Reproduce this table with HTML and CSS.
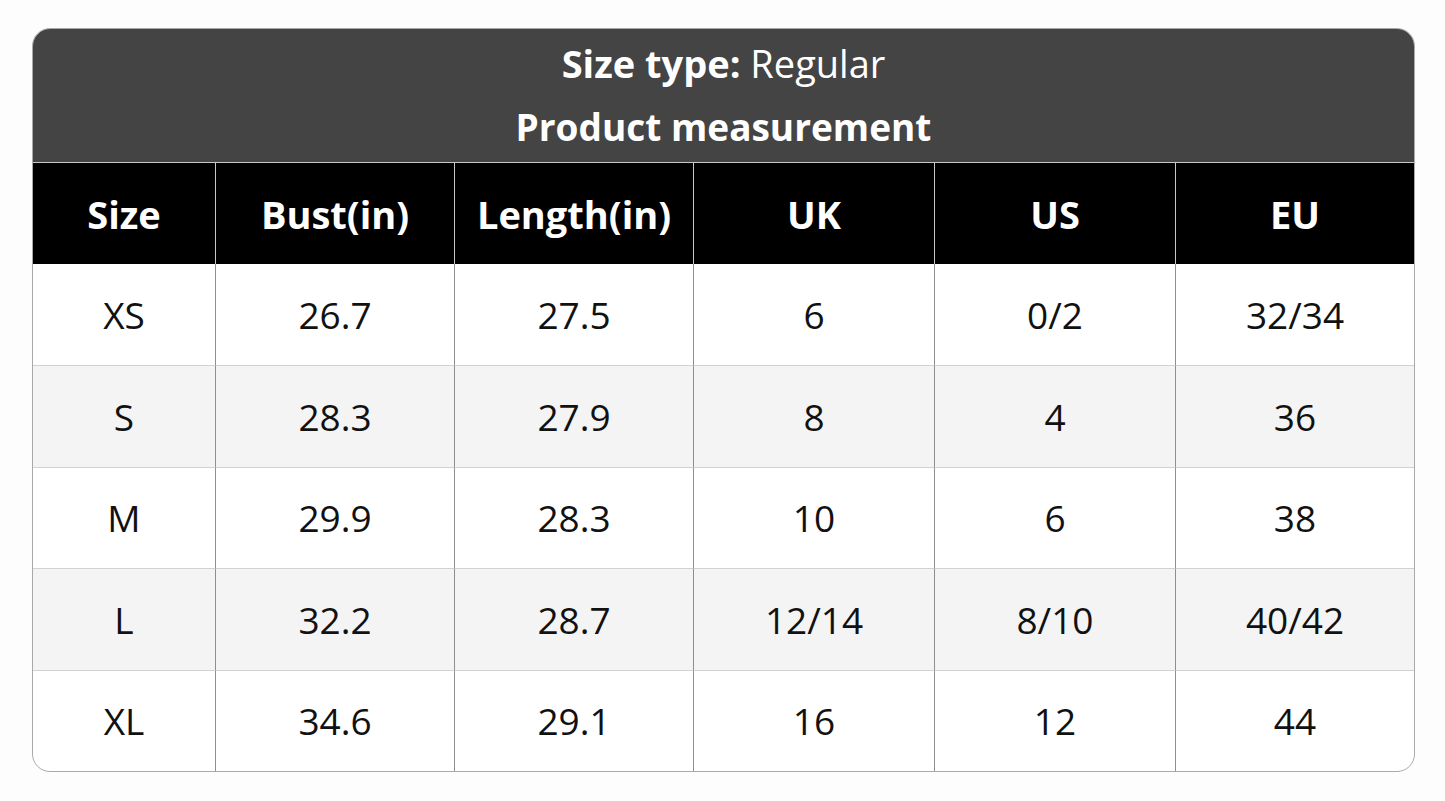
FILE: index.html
```html
<!DOCTYPE html>
<html lang="en">
<head>
<meta charset="utf-8">
<title>Size chart</title>
<link rel="stylesheet" href="styles.css">
</head>
<body>
<div class="card">
  <div class="banner">
    <div class="line1"><b>Size type:</b> Regular</div>
    <div class="line2">Product measurement</div>
  </div>
  <table class="chart">
    <colgroup>
      <col class="c1"><col class="c2"><col class="c3"><col class="c4"><col class="c5"><col class="c6">
    </colgroup>
    <thead>
      <tr><th>Size</th><th>Bust(in)</th><th>Length(in)</th><th>UK</th><th>US</th><th>EU</th></tr>
    </thead>
    <tbody>
      <tr><td>XS</td><td>26.7</td><td>27.5</td><td>6</td><td>0/2</td><td>32/34</td></tr>
      <tr class="alt"><td>S</td><td>28.3</td><td>27.9</td><td>8</td><td>4</td><td>36</td></tr>
      <tr><td>M</td><td>29.9</td><td>28.3</td><td>10</td><td>6</td><td>38</td></tr>
      <tr class="alt"><td>L</td><td>32.2</td><td>28.7</td><td>12/14</td><td>8/10</td><td>40/42</td></tr>
      <tr><td>XL</td><td>34.6</td><td>29.1</td><td>16</td><td>12</td><td>44</td></tr>
    </tbody>
  </table>
</div>
</body>
</html>
```
FILE: styles.css
```css
html, body {
  margin: 0;
  padding: 0;
  background: #fdfdfd;
}
body {
  padding: 28px 0 0 32px;
  font-family: "Open Sans", "Noto Sans", sans-serif;
}
.card {
  width: 1381px;
  border: 1px solid #a9a9a9;
  border-radius: 18px;
  overflow: hidden;
  background: #fff;
}
.banner {
  height: 133px;
  background: #444444;
  color: #fff;
  text-align: center;
  display: flex;
  flex-direction: column;
  align-items: center;
}
.line1 {
  margin-top: 12px;
  height: 44px;
  line-height: 44px;
  font-size: 38px;
  font-weight: 400;
}
.line1 b { font-weight: 700; }
.line2 {
  margin-top: 20px;
  line-height: 44px;
  font-size: 37px;
  font-weight: 700;
}
.chart {
  width: 1381px;
  table-layout: fixed;
  border-collapse: separate;
  border-spacing: 0;
}
.c1 { width: 182px; }
.c2 { width: 239px; }
.c3 { width: 239px; }
.c4 { width: 241px; }
.c5 { width: 241px; }
.c6 { width: 239px; }
.chart th, .chart td {
  padding: 0;
  text-align: center;
  border-left: 1px solid #8e8e8e;
}
.chart th:first-child, .chart td:first-child { border-left: none; }
.chart th {
  height: 101px;
  background: #000;
  color: #fff;
  font-size: 38px;
  font-weight: 700;
  border-top: 1px solid #c8c8c8;
  border-left-color: #c8c8c8;
}
.chart td {
  height: 100.5px;
  font-size: 37px;
  font-weight: 400;
  color: #111;
  border-top: 1px solid #d2d2d2;
}
.chart tbody tr:first-child td {
  border-top: none;
  height: 101px;
}
.chart tr.alt td { background: #f4f4f4; }
```
